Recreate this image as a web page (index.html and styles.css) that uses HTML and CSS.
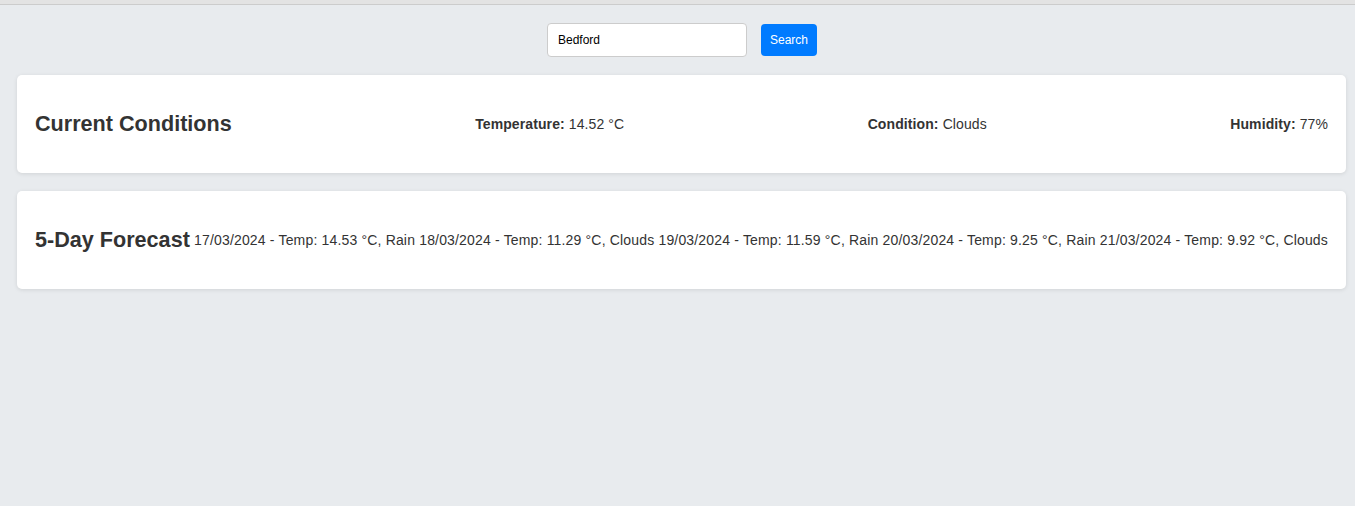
FILE: index.html
```html
<!DOCTYPE html>
<html lang="en">
<head>
<meta charset="utf-8">
<title>Weather</title>
<link rel="stylesheet" href="styles.css">
</head>
<body>
<div class="topbar"></div>
<main class="container">
  <form class="search-row">
    <input class="search-input" type="text" value="Bedford">
    <button class="search-btn" type="button">Search</button>
  </form>
  <section class="card">
    <h2 class="card-title">Current Conditions</h2>
    <p class="stat"><strong>Temperature:</strong> 14.52 °C</p>
    <p class="stat"><strong>Condition:</strong> Clouds</p>
    <p class="stat"><strong>Humidity:</strong> 77%</p>
  </section>
  <section class="card">
    <h2 class="card-title">5-Day Forecast</h2>
    <div class="forecast">
      <span>17/03/2024 - Temp: 14.53 °C, Rain</span>
      <span>18/03/2024 - Temp: 11.29 °C, Clouds</span>
      <span>19/03/2024 - Temp: 11.59 °C, Rain</span>
      <span>20/03/2024 - Temp: 9.25 °C, Rain</span>
      <span>21/03/2024 - Temp: 9.92 °C, Clouds</span>
    </div>
  </section>
</main>
</body>
</html>
```

FILE: styles.css
```css
* { box-sizing: border-box; }

html, body {
  margin: 0;
  padding: 0;
  background: #e8ebee;
  font-family: "Liberation Sans", Arial, sans-serif;
  color: #333;
}

.topbar {
  height: 5px;
  background: #e3e3e3;
  border-bottom: 1px solid #cccccc;
}

.container {
  padding: 18px 9px 0 17px;
}

.search-row {
  display: flex;
  justify-content: center;
  align-items: center;
  gap: 14px;
  padding-left: 1px;
  margin: 0 0 18px;
}

.search-input {
  width: 200px;
  height: 34px;
  padding: 0 10px;
  border: 1px solid #cccccc;
  border-radius: 4px;
  background: #fff;
  font-family: "Liberation Sans", Arial, sans-serif;
  font-size: 12px;
  color: #000;
}

.search-btn {
  height: 32px;
  padding: 0 9px;
  border: none;
  border-radius: 4px;
  background: #007bff;
  color: #fff;
  font-family: "Liberation Sans", Arial, sans-serif;
  font-size: 12px;
}

.card {
  display: flex;
  justify-content: space-between;
  align-items: center;
  height: 98px;
  padding: 0 18px;
  margin-bottom: 18px;
  background: #fff;
  border-radius: 5px;
  box-shadow: 0 1px 4px rgba(0, 0, 0, 0.1);
}

.card-title {
  margin: 0;
  font-size: 21.6px;
  font-weight: bold;
  color: #333;
  white-space: nowrap;
}

.stat {
  margin: 0;
  font-size: 14px;
  letter-spacing: 0.1px;
  color: #333;
  white-space: nowrap;
}

.stat strong { color: #333; }

.forecast {
  font-size: 14px;
  letter-spacing: 0.17px;
  white-space: nowrap;
  color: #333;
}
```
